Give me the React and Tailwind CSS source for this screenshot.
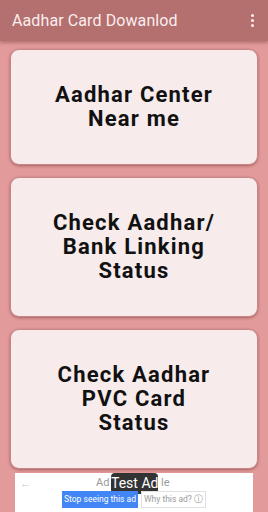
import React from "react";

function Card({ lines }) {
  return (
    <div className="mx-[10px] rounded-[9px] bg-[#f7ebec] border border-[#c98585] shadow-[0_1px_3px_rgba(90,30,30,0.45)] py-[33px] flex flex-col items-center">
      {lines.map((l, i) => (
        <div
          key={i}
          className="text-[22px] leading-[24px] font-bold text-[#111] text-center tracking-[1.2px]"
          style={{ fontFamily: "Roboto, 'Liberation Sans', sans-serif" }}
        >
          {l}
        </div>
      ))}
    </div>
  );
}

export default function App() {
  return (
    <div
      className="w-[268px] h-[512px] bg-[#e29a9a] flex flex-col overflow-hidden relative"
      style={{ fontFamily: "Roboto, 'Liberation Sans', sans-serif" }}
    >
      <div className="h-[41px] bg-[#b46f6f] flex items-center justify-between pl-[12px] pr-[14px] shadow-[0_2px_3px_rgba(100,40,40,0.35)] shrink-0 z-10">
        <span className="text-[16px] text-[#fbeeee] tracking-[0.1px]">Aadhar Card Dowanlod</span>
        <div className="flex flex-col gap-[2px] items-center">
          <span className="w-[3px] h-[3px] rounded-full bg-[#fbeeee]" />
          <span className="w-[3px] h-[3px] rounded-full bg-[#fbeeee]" />
          <span className="w-[3px] h-[3px] rounded-full bg-[#fbeeee]" />
        </div>
      </div>
      <div className="flex flex-col gap-[12px] pt-[8px]">
        <Card lines={["Aadhar Center", "Near me"]} />
        <Card lines={["Check Aadhar/", "Bank Linking", "Status"]} />
        <Card lines={["Check Aadhar", "PVC Card", "Status"]} />
      </div>
      <div className="absolute left-[15px] right-[15px] top-[473px] bottom-0 bg-white">
        <div className="absolute left-[5px] top-[3px] text-[#c7c7c7] text-[11px]">←</div>
        <div className="absolute left-[81px] top-[3px] text-[#9a9a9a] text-[11px] leading-[14px]">Ad</div>
        <div className="absolute left-[146px] top-[3px] text-[#9a9a9a] text-[11px] leading-[14px]">le</div>
        <div className="absolute left-[96px] top-0 h-[21px] w-[47px] rounded-[4px] bg-[#333] text-white text-[14px] leading-[21px] text-center whitespace-nowrap">Test Ad</div>
        <div className="absolute left-[47px] top-[18px] h-[17px] w-[76px] bg-[#4285f4] text-white text-[8.5px] leading-[17px] text-center">Stop seeing this ad</div>
        <div className="absolute left-[126px] top-[18px] h-[17px] w-[65px] bg-white border border-[#e0e0e0] text-[#9a9a9a] text-[8.5px] leading-[15px] text-center">Why this ad? ⓘ</div>
      </div>
    </div>
  );
}
